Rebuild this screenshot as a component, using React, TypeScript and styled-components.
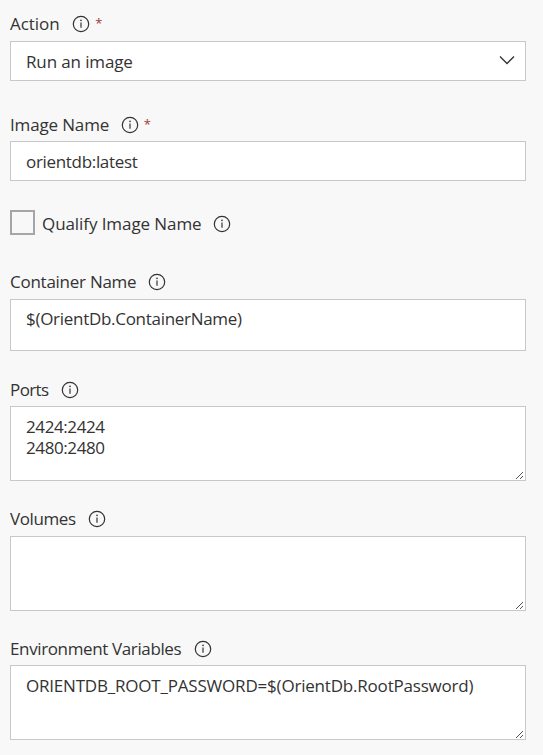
import React from "react";
import styled, { createGlobalStyle } from "styled-components";

const GlobalStyle = createGlobalStyle`
  *, *::before, *::after { box-sizing: border-box; }
  body { margin: 0; background: #f8f8f8; }
`;

const Form = styled.main`
  min-height: 755px;
  padding: 7px 17px 0 10px;
  background: #f8f8f8;
  color: #333;
  font: 400 17px/22px "Open Sans", "Noto Sans", sans-serif;
`;

const Field = styled.section<{ $gap: number }>`
  display: flex;
  flex-direction: column;
  margin-bottom: ${(p) => p.$gap}px;
`;

const LabelRow = styled.div<{ $shift?: number }>`
  display: flex;
  align-items: center;
  height: 34px;
  padding-top: ${(p) => (p.$shift ?? 0) * 2}px;
`;

const Text = styled.span<{ $tracking: number }>`
  display: block;
  letter-spacing: ${(p) => p.$tracking}px;
  white-space: pre;
`;

const InfoSvg = styled.svg<{ $gap: number }>`
  flex: none;
  width: 18px;
  height: 18px;
  margin-left: ${(p) => p.$gap}px;
`;

const Required = styled.span`
  height: 22px;
  margin-left: 5px;
  color: #a4373a;
  font-size: 13px;
  line-height: 21px;
`;

const SelectBox = styled.div`
  display: flex;
  align-items: center;
  justify-content: space-between;
  height: 40px;
  padding: 1px 10px 0 15px;
  border: 1px solid #c8c8c8;
  background: #fff;
`;

const Area = styled.div<{ $height: number; $inset?: number }>`
  position: relative;
  height: ${(p) => p.$height}px;
  padding: ${(p) => p.$inset ?? 9}px 15px 0;
  border: 1px solid #c8c8c8;
  background: #fff;
  line-height: 21px;
`;

const Grip = styled.svg`
  position: absolute;
  right: 1px;
  bottom: 1px;
  width: 8px;
  height: 8px;
`;

const Chevron = styled.svg`
  width: 16px;
  height: 10px;
  margin-top: -3px;
`;

const CheckRow = styled.section`
  display: flex;
  align-items: center;
  height: 27px;
  margin-bottom: 28px;
`;

const CheckBox = styled.span`
  width: 25px;
  height: 25px;
  margin: 0 7px 2px 0;
  border: 2px solid #a6a6a6;
  background: #f8f8f8;
`;

function InfoIcon({ gap = 12 }: { gap?: number }) {
  return (
    <InfoSvg $gap={gap} viewBox="0 0 18 18" fill="none" aria-label="Info">
      <circle cx="9" cy="9" r="7.7" stroke="#333" strokeWidth="1.2" />
      <path d="M9 7.4v5.4" stroke="#333" strokeWidth="1.2" />
      <circle cx="9" cy="5.4" r=".8" fill="#333" />
    </InfoSvg>
  );
}

function ResizeGrip() {
  return (
    <Grip viewBox="0 0 8 8" fill="#555" shapeRendering="crispEdges">
      {[0, 1, 2, 3, 4, 5, 6].map((i) => (
        <rect key={i} x={i} y={7 - i} width="1" height="1" />
      ))}
      {[4, 5, 6].map((i) => (
        <rect key={i} x={i} y={11 - i} width="1" height="1" />
      ))}
    </Grip>
  );
}

interface LabelProps {
  text: string;
  tracking: number;
  shift?: number;
  iconGap?: number;
  required?: boolean;
}

function Label({ text, tracking, shift, iconGap, required }: LabelProps) {
  return (
    <LabelRow $shift={shift}>
      <Text $tracking={tracking}>{text}</Text>
      <InfoIcon gap={iconGap} />
      {required && <Required>*</Required>}
    </LabelRow>
  );
}

export default function App() {
  return (
    <Form>
      <GlobalStyle />
      <Field $gap={26}>
        <Label text="Action" tracking={-0.05} iconGap={12.6} required />
        <SelectBox>
          <Text $tracking={-0.13}>Run an image</Text>
          <Chevron viewBox="0 0 16 10" fill="none">
            <path d="M1 1.5l7 7 7-7" stroke="#333" strokeWidth="1.3" />
          </Chevron>
        </SelectBox>
      </Field>
      <Field $gap={29}>
        <Label text="Image Name" tracking={-0.15} shift={1} iconGap={11.5} required />
        <SelectBox>
          <Text $tracking={-0.32}>orientdb:latest</Text>
        </SelectBox>
      </Field>
      <CheckRow>
        <CheckBox />
        <Text $tracking={-0.08}>Qualify Image Name</Text>
        <InfoIcon gap={11} />
      </CheckRow>
      <Field $gap={21}>
        <Label text="Container Name" tracking={-0.26} iconGap={11.5} />
        <Area $height={52} $inset={8}>
          <Text $tracking={-0.29}>$(OrientDb.ContainerName)</Text>
        </Area>
      </Field>
      <Field $gap={21}>
        <Label text="Ports" tracking={-0.6} shift={1} />
        <Area $height={75}>
          <Text $tracking={-0.4}>{"2424:2424\n2480:2480"}</Text>
          <ResizeGrip />
        </Area>
      </Field>
      <Field $gap={20}>
        <Label text="Volumes" tracking={-0.4} iconGap={12.3} />
        <Area $height={75}>
          <ResizeGrip />
        </Area>
      </Field>
      <Field $gap={0}>
        <Label text="Environment Variables" tracking={-0.37} shift={1} iconGap={12.3} />
        <Area $height={75}>
          <Text $tracking={-0.2}>ORIENTDB_ROOT_PASSWORD=$(OrientDb.RootPassword)</Text>
          <ResizeGrip />
        </Area>
      </Field>
    </Form>
  );
}
